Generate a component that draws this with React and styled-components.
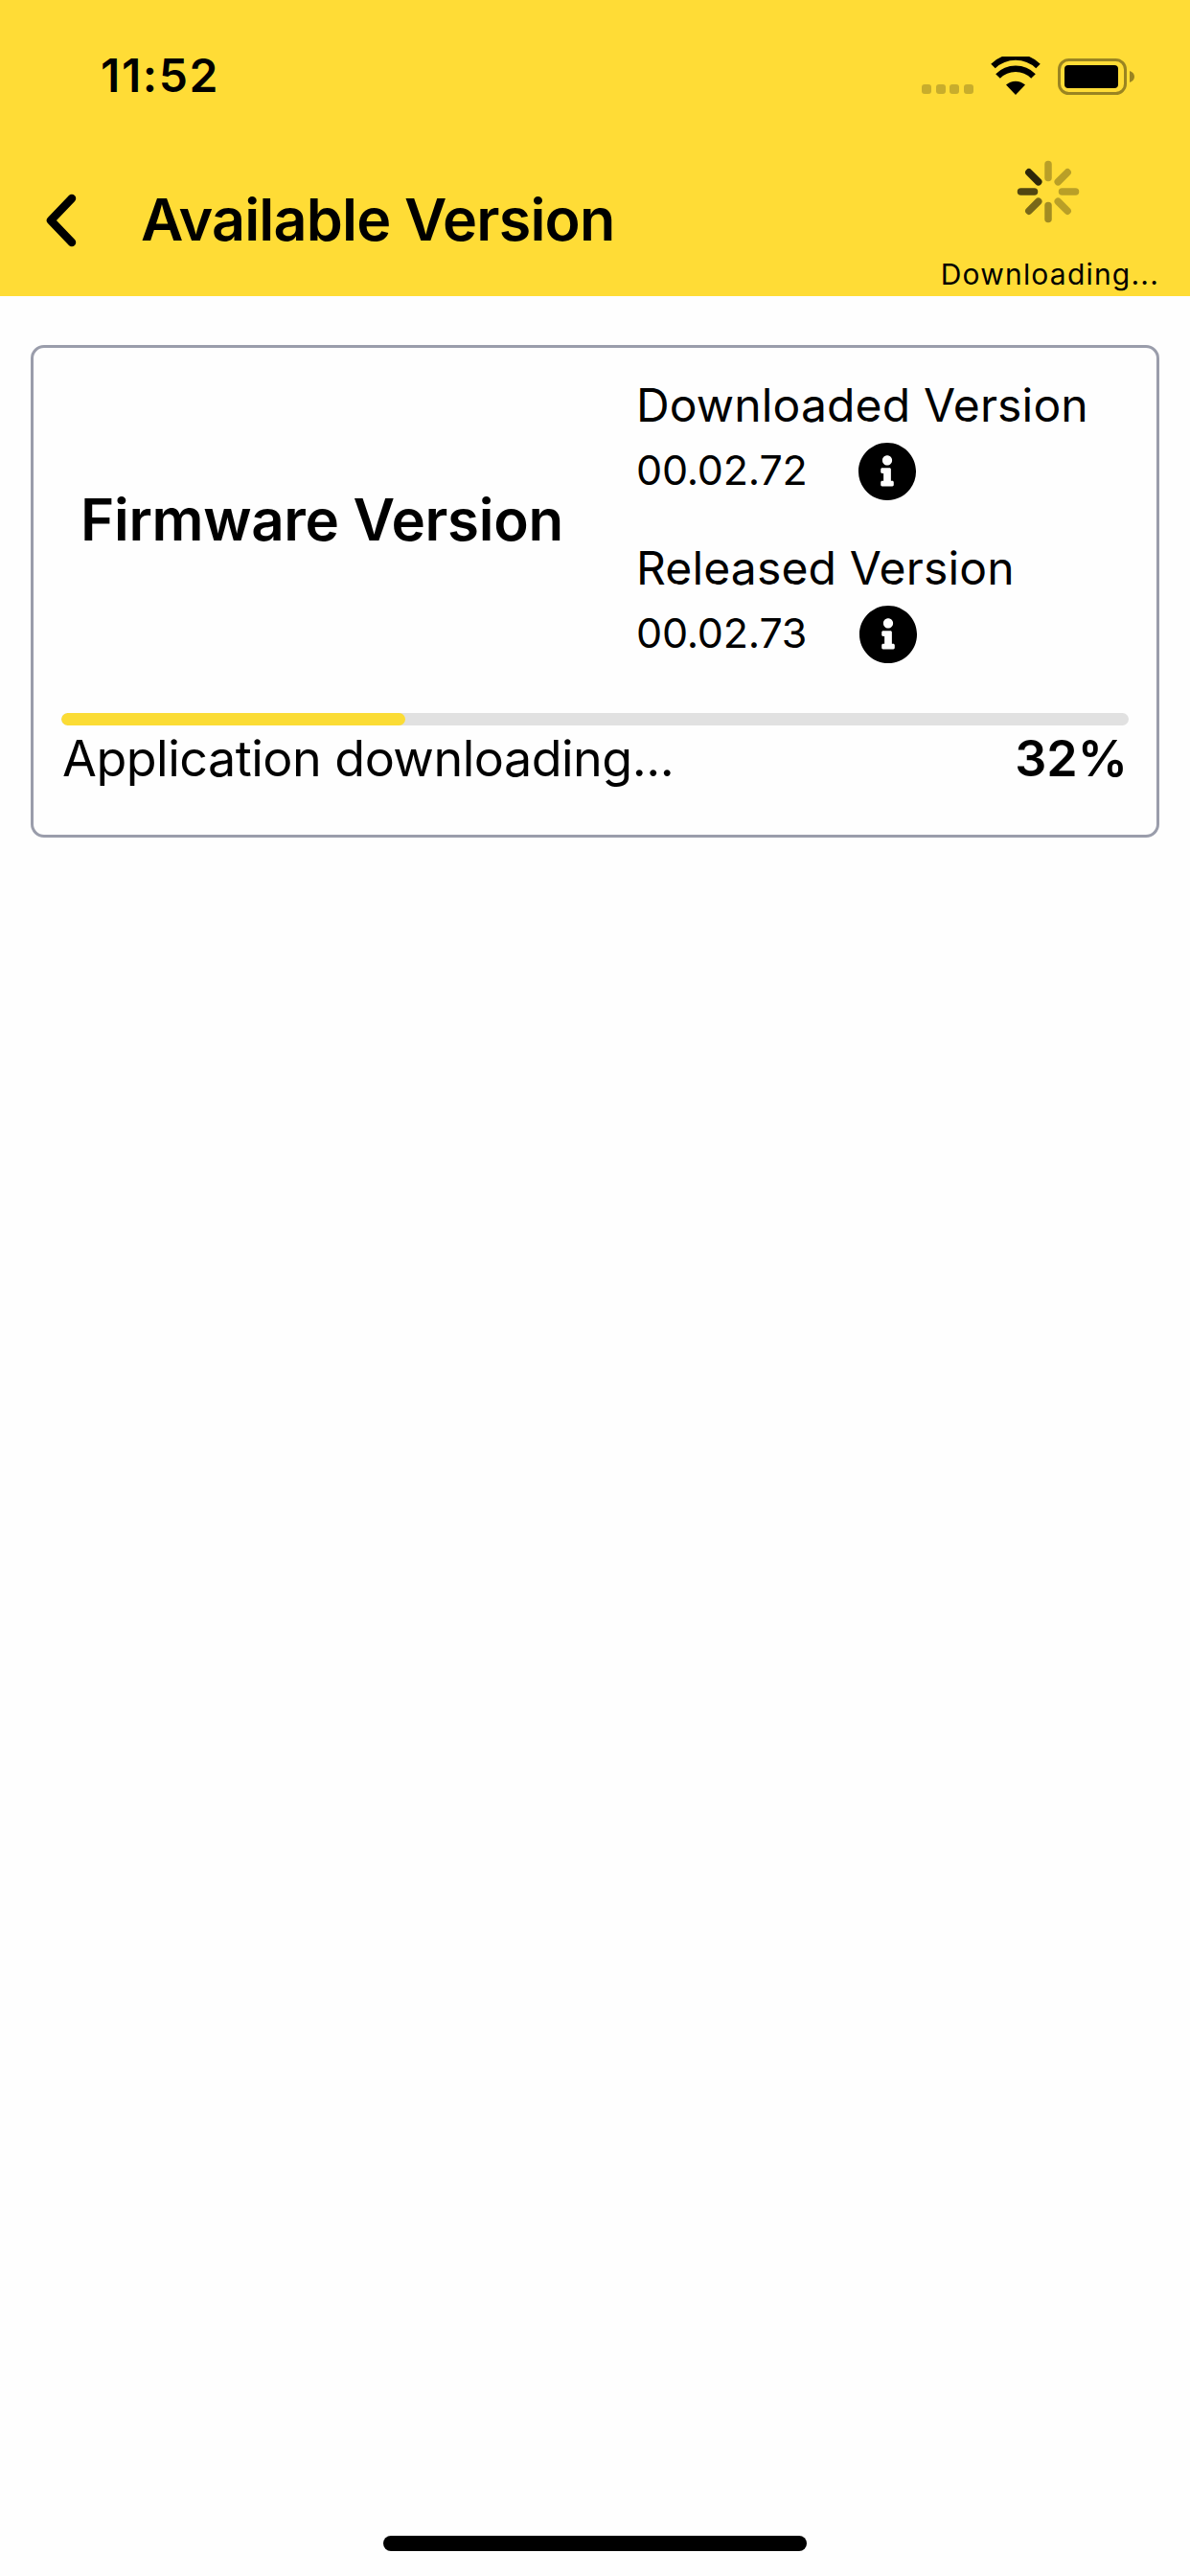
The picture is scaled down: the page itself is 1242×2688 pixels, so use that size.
import React from 'react';
import styled, { createGlobalStyle } from 'styled-components';
import { FaInfoCircle } from 'react-icons/fa';

const GlobalStyle = createGlobalStyle`
	html, body {
		margin: 0;
		padding: 0;
		background: #fefefe;
		font-family: Inter, "Liberation Sans", sans-serif;
		color: #000;
	}
`;

const Page = styled.div`
	width: 1242px;
	height: 2688px;
	display: flex;
	flex-direction: column;
	background: #fefefe;
`;

const Header = styled.header`
	height: 309px;
	display: flex;
	flex-direction: column;
	background: #ffdc36;
`;

const StatusBar = styled.div`
	height: 158px;
	display: flex;
	align-items: center;
	padding: 0 58px 0 105px;
`;

const Time = styled.span`
	font-size: 48px;
	font-weight: 600;
	letter-spacing: 1.6px;
	line-height: 48px;
`;

const StatusIcons = styled.div`
	margin-left: auto;
	display: flex;
	align-items: flex-end;
	gap: 18px;
`;

const SignalDots = styled.div`
	display: flex;
	gap: 4.6px;
	margin-bottom: 1px;
`;

const Dot = styled.span`
	width: 10px;
	height: 10px;
	border-radius: 3px;
	background: #c8ad2c;
`;

const NavBar = styled.div`
	flex: 1;
	display: flex;
	align-items: center;
	padding: 0 32px 0 47px;
`;

const BackIcon = styled.svg`
	width: 34px;
	height: 56px;
	margin-bottom: 8px;
`;

const Title = styled.h1`
	margin: 0 0 10px 66px;
	font-size: 61px;
	font-weight: 600;
	letter-spacing: -0.8px;
	line-height: 70px;
`;

const DownloadStatus = styled.div`
	margin-left: auto;
	align-self: flex-end;
	display: flex;
	flex-direction: column;
	align-items: center;
	padding-bottom: 5px;
`;

const Spinner = styled.svg`
	width: 66px;
	height: 66px;
	margin-right: 4px;
`;

const DownloadLabel = styled.span`
	margin-top: 35px;
	font-size: 30px;
	line-height: 36px;
	letter-spacing: 1.2px;
`;

const Card = styled.section`
	margin: 51px 32px 0;
	height: 514px;
	box-sizing: border-box;
	border: 3px solid #9a9dab;
	border-radius: 14px;
	padding: 0 29px;
	display: flex;
	flex-direction: column;
`;

const CardTop = styled.div`
	height: 381px;
	box-sizing: border-box;
	padding-bottom: 20px;
	display: grid;
	grid-template-columns: 600px 1fr;
	align-items: center;
`;

const CardTitle = styled.h2`
	margin: 0 0 4px 20px;
	font-size: 60px;
	font-weight: 600;
	letter-spacing: -0.3px;
	line-height: 70px;
`;

const VersionList = styled.div`
	display: flex;
	flex-direction: column;
	gap: 43px;
`;

const VersionLabel = styled.div`
	font-size: 48px;
	letter-spacing: 0.15px;
	line-height: 56px;
`;

const VersionRow = styled.div`
	display: flex;
	align-items: center;
	height: 61px;
	margin-top: 10px;
`;

const VersionValue = styled.span`
	width: ${(p) => p.$width}px;
	font-size: 43px;
	letter-spacing: -0.2px;
	line-height: 58px;
	margin-bottom: 3px;
`;

const InfoIcon = styled(FaInfoCircle)`
	width: 62px;
	height: 62px;
	color: #000;
`;

const ProgressTrack = styled.div`
	height: 13px;
	border-radius: 7px;
	background: #e1e1e1;
	overflow: hidden;
`;

const ProgressFill = styled.div`
	height: 100%;
	border-radius: 7px;
	background: #fbdc35;
`;

const ProgressRow = styled.div`
	display: flex;
	justify-content: space-between;
	margin-top: 3px;
	padding: 0 1px;
	font-size: 52px;
	line-height: 64px;
	letter-spacing: -0.5px;
`;

const Percent = styled.span`
	font-weight: 600;
	letter-spacing: 0;
`;

const Spacer = styled.div`
	flex: 1;
`;

const HomeIndicator = styled.div`
	align-self: center;
	width: 442px;
	height: 16px;
	margin-bottom: 26px;
	border-radius: 8px;
	background: #000;
`;

// top-left spoke is darkest, fades going counter-clockwise
const spokes = [
	{ angle: 0, opacity: 0.27 },
	{ angle: 45, opacity: 0.27 },
	{ angle: 90, opacity: 0.27 },
	{ angle: 135, opacity: 0.27 },
	{ angle: 180, opacity: 0.36 },
	{ angle: 225, opacity: 0.52 },
	{ angle: 270, opacity: 0.68 },
	{ angle: 315, opacity: 0.82 },
];

const versions = [
	{ label: 'Downloaded Version', value: '00.02.72', width: 231 },
	{ label: 'Released Version', value: '00.02.73', width: 232 },
];

const App = () => {
	const progress = 32;

	return (
		<Page>
			<GlobalStyle />
			<Header>
				<StatusBar>
					<Time>11:52</Time>
					<StatusIcons>
						<SignalDots>
							<Dot />
							<Dot />
							<Dot />
							<Dot />
						</SignalDots>
						<svg width="52" height="40" viewBox="0 0 52 40">
							<path d="M26 40 L16 29.5 A15 15 0 0 1 36 29.5 Z" fill="#000" />
							<path d="M7.5 20.5 A26 26 0 0 1 44.5 20.5" fill="none" stroke="#000" strokeWidth="6.5" />
							<path d="M2.5 12 A34 34 0 0 1 49.5 12" fill="none" stroke="#000" strokeWidth="6.5" transform="translate(0 -2)" />
						</svg>
						<svg width="80" height="38" viewBox="0 0 80 38">
							<rect x="1.5" y="1.5" width="69" height="35" rx="10" fill="none" stroke="#9a8421" strokeWidth="3" />
							<rect x="7" y="7" width="56" height="24" rx="4" fill="#000" />
							<path d="M75 13 C78 14 80 16 80 19 C80 22 78 24 75 25 Z" fill="#9a8421" />
						</svg>
					</StatusIcons>
				</StatusBar>
				<NavBar>
					<BackIcon viewBox="0 0 34 56">
						<path d="M28 5 L6 28 L28 51" fill="none" stroke="#000" strokeWidth="8.5" strokeLinecap="round" strokeLinejoin="round" />
					</BackIcon>
					<Title>Available Version</Title>
					<DownloadStatus>
						<Spinner viewBox="-33 -33 66 66">
							{spokes.map((s) => (
								<line
									key={s.angle}
									x1="0"
									y1="-14.5"
									x2="0"
									y2="-28.5"
									stroke="#000"
									strokeWidth="7.5"
									strokeLinecap="round"
									opacity={s.opacity}
									transform={`rotate(${s.angle})`}
								/>
							))}
						</Spinner>
						<DownloadLabel>Downloading...</DownloadLabel>
					</DownloadStatus>
				</NavBar>
			</Header>
			<Card>
				<CardTop>
					<CardTitle>Firmware Version</CardTitle>
					<VersionList>
						{versions.map((v) => (
							<div key={v.label}>
								<VersionLabel>{v.label}</VersionLabel>
								<VersionRow>
									<VersionValue $width={v.width}>{v.value}</VersionValue>
									<InfoIcon />
								</VersionRow>
							</div>
						))}
					</VersionList>
				</CardTop>
				<ProgressTrack>
					<ProgressFill style={{ width: `${(359 / 1114) * 100}%` }} />
				</ProgressTrack>
				<ProgressRow>
					<span>Application downloading...</span>
					<Percent>{progress}%</Percent>
				</ProgressRow>
			</Card>
			<Spacer />
			<HomeIndicator />
		</Page>
	);
};

export default App;
